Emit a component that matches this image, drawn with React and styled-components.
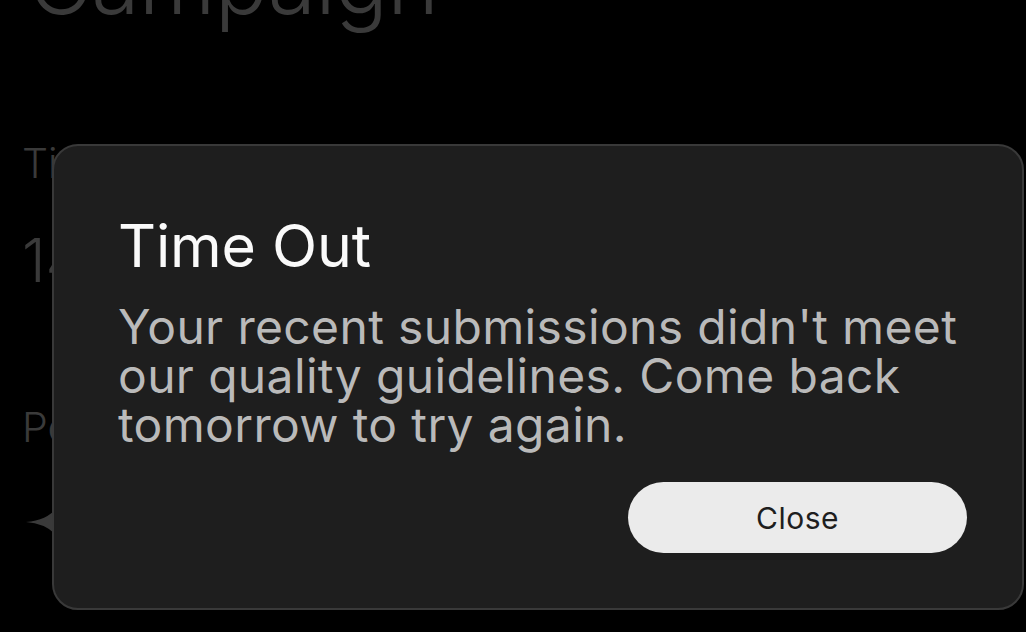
import React from "react";
import styled, { createGlobalStyle } from "styled-components";

const GlobalStyle = createGlobalStyle`
  html, body {
    margin: 0;
    padding: 0;
    background: #000;
    overflow: hidden;
  }
  body {
    font-family: Inter, "Noto Sans", sans-serif;
    -webkit-font-smoothing: antialiased;
  }
  * { box-sizing: border-box; }
`;

const Screen = styled.main`
  width: 1026px;
  height: 632px;
  background: #000;
  overflow: hidden;
  position: relative;
`;

const CampaignBody = styled.section`
  display: flex;
  flex-direction: column;
  align-items: flex-start;
  padding-left: 22px;
  color: #3a3a3a;
  font-weight: 300;
`;

const Heading = styled.h1`
  margin: -62px 0 0 6px;
  font-size: 88px;
  line-height: 88px;
  font-weight: 300;
  letter-spacing: -0.8px;
`;

const StatLabel = styled.div`
  margin-top: ${(p) => p.$gap}px;
  font-size: 41px;
  line-height: 48px;
`;

const StatValue = styled.div`
  margin-top: 37px;
  font-size: 60px;
  line-height: 72px;
`;

const Sparkle = styled.svg`
  margin-top: 27px;
  display: block;
`;

const Dialog = styled.div`
  position: fixed;
  left: 52px;
  top: 144px;
  width: 972px;
  height: 466px;
  background: #1e1e1e;
  border: 2px solid #393939;
  border-radius: 26px;
  padding: 68px 55px 55px 64px;
  display: flex;
  flex-direction: column;
`;

const Title = styled.h2`
  margin: 0;
  font-size: 59px;
  line-height: 64px;
  font-weight: 400;
  color: #fafafa;
  letter-spacing: -0.2px;
`;

const Message = styled.p`
  margin: 24px 0 0;
  font-size: 48px;
  line-height: 49px;
  font-weight: 400;
  color: #bababa;
  letter-spacing: 0.35px;
`;

const Actions = styled.div`
  margin-top: auto;
  display: flex;
  justify-content: flex-end;
`;

const CloseButton = styled.button`
  width: 339px;
  height: 71px;
  border: none;
  border-radius: 36px;
  background: #ebebeb;
  color: #1e1e1e;
  font-family: Inter, "Noto Sans", sans-serif;
  font-size: 30px;
  font-weight: 400;
  letter-spacing: 0.5px;
  cursor: pointer;
`;

export default function App() {
  return (
    <>
      <GlobalStyle />
      <Screen>
        <CampaignBody>
          <Heading>Campaign</Heading>
          <StatLabel $gap={113}>Time left</StatLabel>
          <StatValue>14h 32m</StatValue>
          <StatLabel $gap={107}>Points</StatLabel>
          <Sparkle width="88" height="88" viewBox="-44 -44 88 88">
            <path
              d="M-40 0 Q-3 -3 0 -40 Q3 -3 40 0 Q3 3 0 40 Q-3 3 -40 0 Z"
              fill="#3a3a3a"
            />
          </Sparkle>
        </CampaignBody>
        <Dialog role="dialog" aria-modal="true">
          <Title>Time Out</Title>
          <Message>
            Your recent submissions didn't meet our quality guidelines. Come
            back tomorrow to try again.
          </Message>
          <Actions>
            <CloseButton>Close</CloseButton>
          </Actions>
        </Dialog>
      </Screen>
    </>
  );
}
